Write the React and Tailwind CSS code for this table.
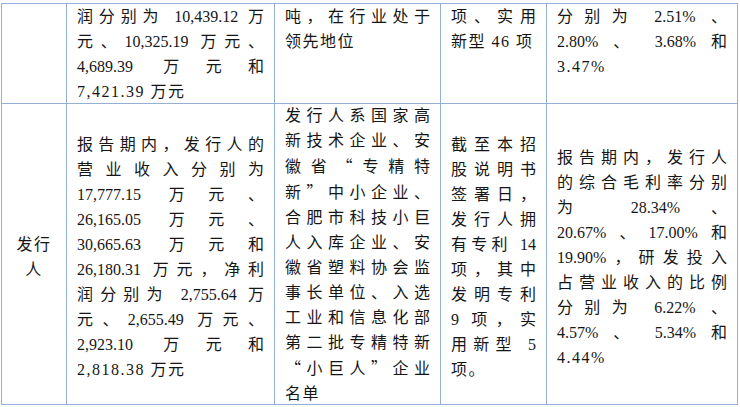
const font = { fontFamily: '"Liberation Serif", "Noto Sans CJK SC", serif' }

const cellBase = 'bg-white px-[10px] text-[16px] leading-[25px] text-[#161616]'

// render one paragraph as fixed lines, every line justified except the last
function Lines({ lines }) {
  return lines.map((line, i) => (
    <div
      key={i}
      className={
        i < lines.length - 1
          ? 'whitespace-nowrap text-justify [text-align-last:justify]'
          : 'whitespace-nowrap text-left tracking-[1.5px]'
      }
    >
      {line.split(/([“”])/).map((part, j) =>
        part === '“' || part === '”' ? (
          <span key={j} style={{ fontFamily: '"Noto Sans CJK SC", sans-serif' }}>{part}</span>
        ) : (
          part
        )
      )}
    </div>
  ))
}

const row1 = [
  [],
  ['润分别为 10,439.12 万', '元、10,325.19 万元、', '4,689.39 万元和', '7,421.39 万元'],
  ['吨，在行业处于', '领先地位'],
  ['项、实用', '新型 46 项'],
  ['分别为 2.51% 、', '2.80% 、 3.68% 和', '3.47%'],
]

const row2 = [
  [],
  [
    '报告期内，发行人的',
    '营业收入分别为',
    '17,777.15 万元、',
    '26,165.05 万元、',
    '30,665.63 万元和',
    '26,180.31 万元，净利',
    '润分别为 2,755.64 万',
    '元、2,655.49 万元、',
    '2,923.10 万元和',
    '2,818.38 万元',
  ],
  [
    '发行人系国家高',
    '新技术企业、安',
    '徽省“专精特',
    '新”中小企业、',
    '合肥市科技小巨',
    '人入库企业、安',
    '徽省塑料协会监',
    '事长单位、入选',
    '工业和信息化部',
    '第二批专精特新',
    '“小巨人”企业',
    '名单',
  ],
  [
    '截至本招',
    '股说明书',
    '签署日，',
    '发行人拥',
    '有专利 14',
    '项，其中',
    '发明专利',
    '9 项，实',
    '用新型 5',
    '项。',
  ],
  [
    '报告期内，发行人',
    '的综合毛利率分别',
    '为 28.34% 、',
    '20.67%、17.00%和',
    '19.90%，研发投入',
    '占营业收入的比例',
    '分别为 6.22% 、',
    '4.57% 、 5.34% 和',
    '4.44%',
  ],
]

export default function App() {
  return (
    <div className="min-h-screen bg-white pt-[3px] pl-px" style={font}>
      <div className="grid w-[737px] grid-cols-[64px_207px_165px_105px_190px] grid-rows-[99px_300px] gap-px bg-[#93afd3] p-px">
        {row1.map((lines, i) => (
          <div key={`a${i}`} className={`${cellBase} overflow-hidden`}>
            <Lines lines={lines} />
          </div>
        ))}

        <div className={`${cellBase} flex flex-col items-center justify-center pt-[6px] text-center tracking-[1.5px]`}>
          <div>发行</div>
          <div>人</div>
        </div>
        {row2.slice(1).map((lines, i) => (
          <div
            key={`b${i}`}
            className={`${cellBase} flex flex-col justify-center ${i === 1 ? '' : 'pt-[6px]'}`}
          >
            <div>
              <Lines lines={lines} />
            </div>
          </div>
        ))}
      </div>
    </div>
  )
}
